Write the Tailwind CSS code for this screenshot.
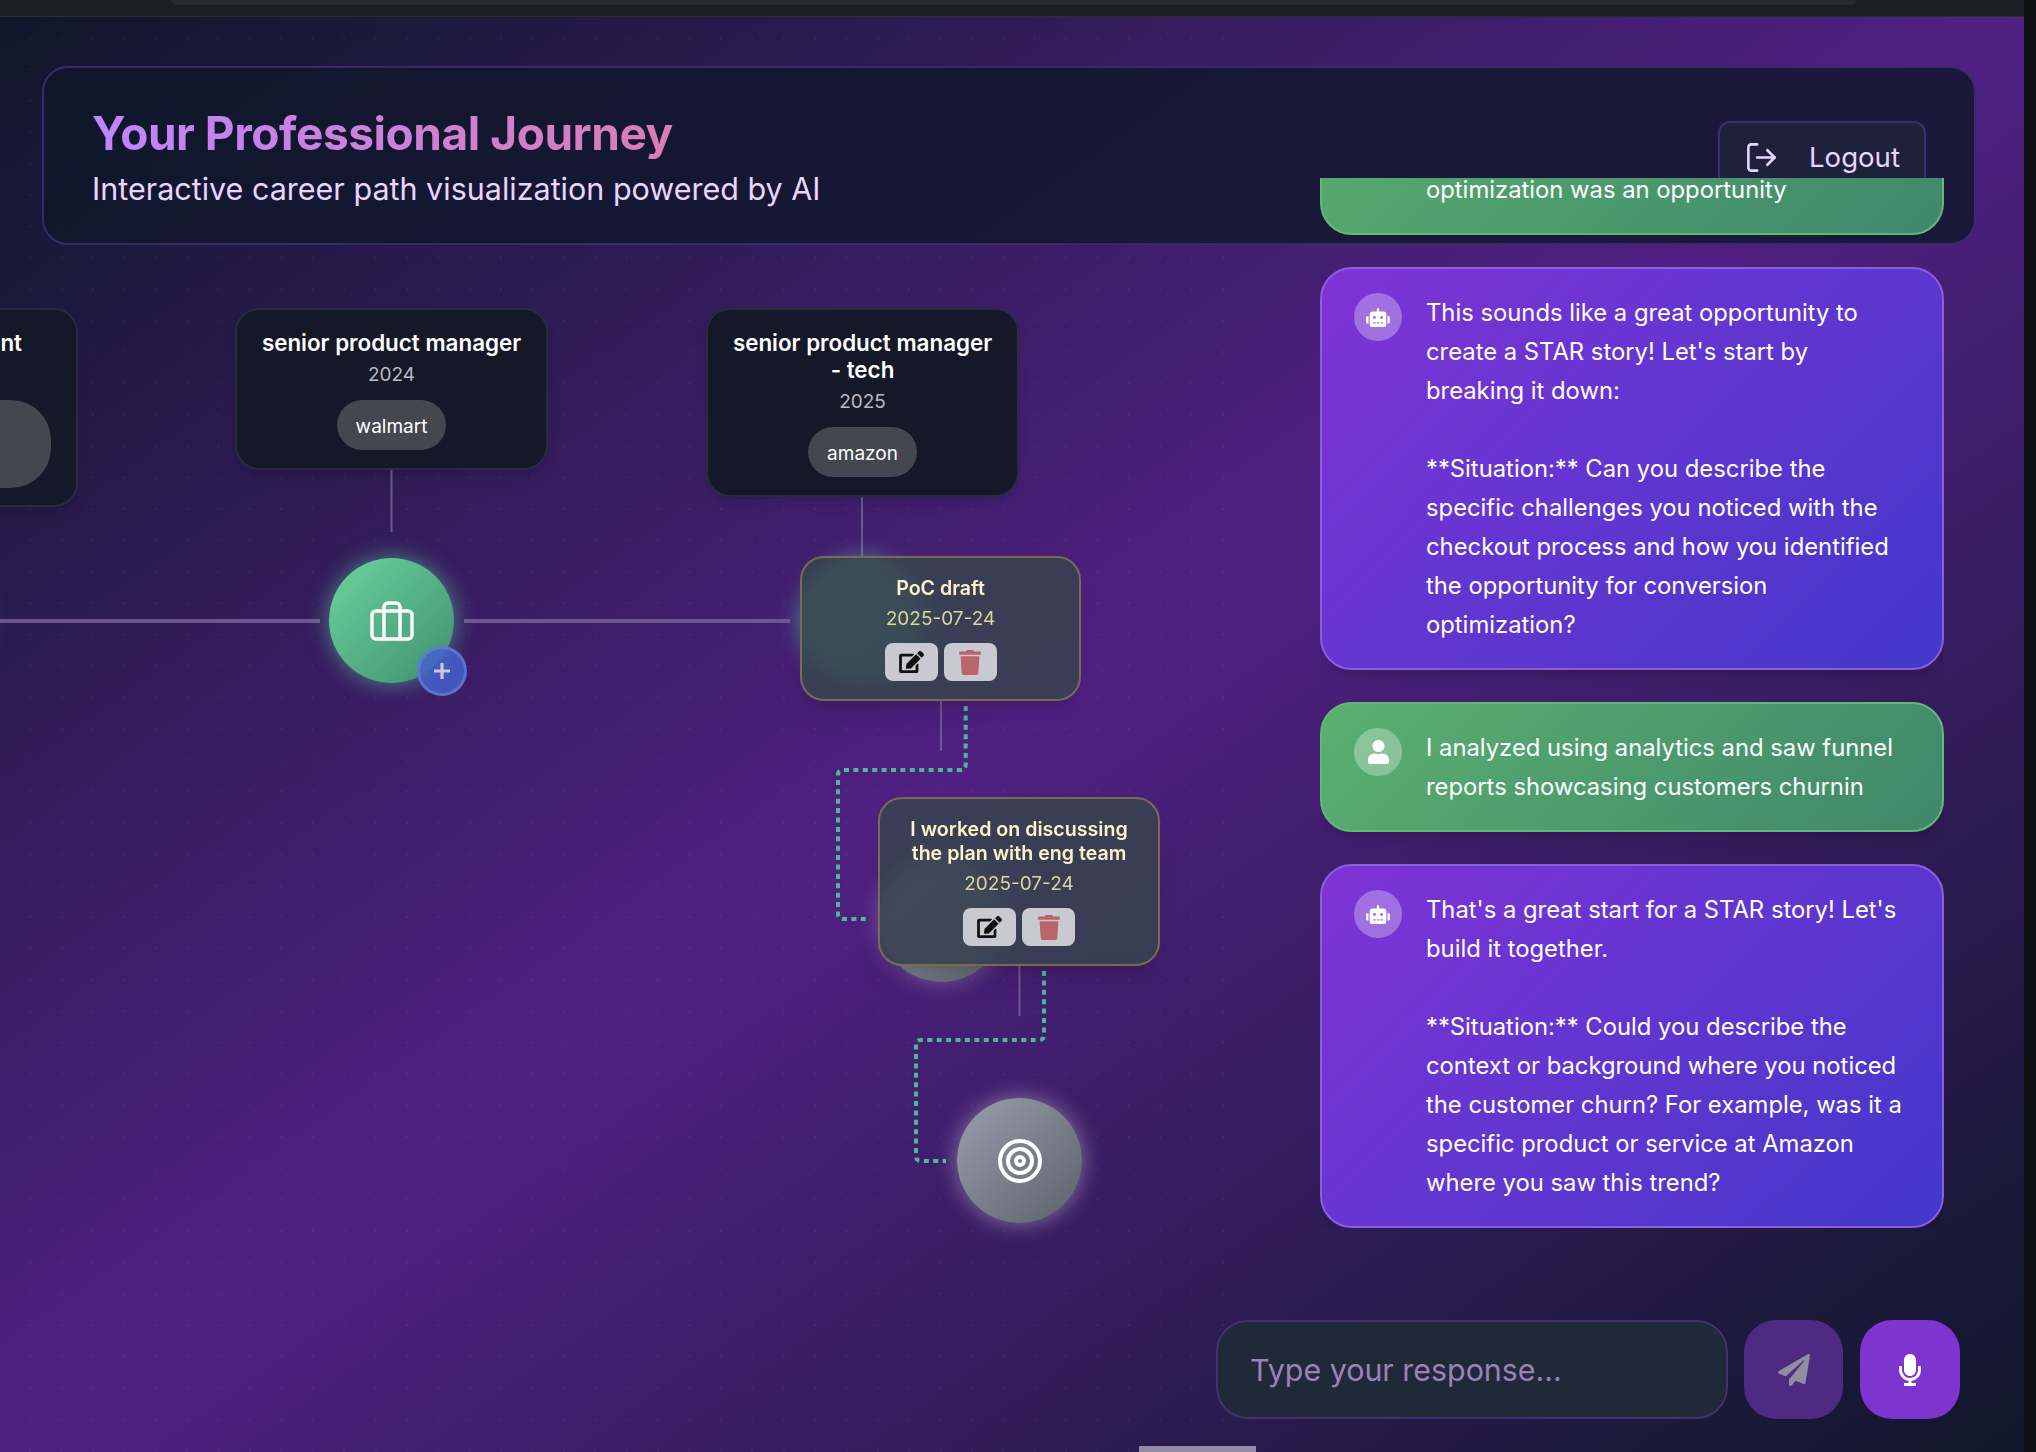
<!DOCTYPE html>
<html lang="en">
<head>
    <meta charset="UTF-8">
    <meta name="viewport" content="width=device-width, initial-scale=1.0">
    <title>Your Professional Journey</title>
    <script src="https://cdn.jsdelivr.net/npm/@tailwindcss/browser@4"></script>
</head>
<body class="bg-[#0f1115] font-[Inter,sans-serif]">
<div class="flex w-[2036px] h-[1452px] overflow-hidden">
    <div class="flex flex-col w-[2024px] h-full">
        <!-- browser chrome sliver -->
        <div class="h-[17px] shrink-0 bg-[#1b1e24] border-b border-[#2a2d33]">
            <div class="ml-[171px] w-[1685px] h-[5px] bg-[#262a31] rounded-b-lg"></div>
        </div>

        <main class="relative flex-1 overflow-hidden bg-[linear-gradient(to_bottom_right,#0f172a_0%,#502083_50%,#0f172a_100%)]">
            <!-- dotted grid -->
            <div class="absolute left-0 top-0 w-[1254px] h-full bg-[radial-gradient(circle,rgba(255,255,255,0.05)_1px,transparent_1.5px)] bg-size-[31.4px_31.4px] bg-position-[14.5px_-26px]"></div>

            <!-- timeline canvas -->
            <div class="absolute inset-0">
                <svg class="absolute left-0 top-0" width="2024" height="1435" viewBox="0 17 2024 1435" fill="none">
                    <path d="M0 621H320M464 621H790" stroke="#6d5591" stroke-width="4"/>
                    <path d="M391.5 469V532M862 497V556M941 701V751M1019.5 966V1016" stroke="#6a5a8e" stroke-width="2"/>
                    <path d="M965.7 706V765q0 5-5 5H843q-5 0-5 5V914q0 5 5 5H868" stroke="#4cb996" stroke-width="4" stroke-dasharray="5 4.4"/>
                    <path d="M1044 971V1035q0 5-5 5H921q-5 0-5 5V1156q0 5 5 5H946" stroke="#4cb996" stroke-width="4" stroke-dasharray="5 4.4"/>
                </svg>

                <!-- year cards -->
                <div class="absolute left-[-235px] top-[291px] w-[313px] h-[199px] px-5 pt-[19px] flex flex-col items-end text-center bg-[#151829] border-2 border-[#2a2b3c] rounded-[24px] shadow-lg">
                    <div class="mr-[34px] text-[22.4px] leading-[27px] font-semibold text-white whitespace-nowrap">product management</div>
                    <div class="mt-[44px] mr-[5px] w-[260px] h-[88px] rounded-[40px] bg-[#44474f]"></div>
                </div>
                <div class="absolute left-[235px] top-[291px] w-[313px] px-5 pt-[19px] pb-[18px] flex flex-col items-center text-center bg-[#151829] border-2 border-[#2a2b3c] rounded-[24px] shadow-lg">
                    <div class="text-[22.4px] leading-[27px] font-semibold text-white">senior product manager</div>
                    <div class="mt-[7px] text-[19px] leading-6 text-[#b9bbc3]">2024</div>
                    <div class="mt-[13px] h-[50px] px-[19px] pt-[5px] flex items-center rounded-[25px] bg-[#44474f] text-[19px] text-white">walmart</div>
                </div>
                <div class="absolute left-[706px] top-[291px] w-[313px] px-5 pt-[19px] pb-[18px] flex flex-col items-center text-center bg-[#151829] border-2 border-[#2a2b3c] rounded-[24px] shadow-lg">
                    <div class="text-[22.4px] leading-[27px] font-semibold text-white">senior product manager - tech</div>
                    <div class="mt-[7px] text-[19px] leading-6 text-[#b9bbc3]">2025</div>
                    <div class="mt-[13px] h-[50px] px-[19px] pt-[5px] flex items-center rounded-[25px] bg-[#44474f] text-[19px] text-white">amazon</div>
                </div>

                <!-- nodes -->
                <div class="absolute left-[-141px] top-[541px] size-[125px] rounded-full bg-[#5aba8c] shadow-[0_0_22px_rgba(94,210,160,0.6)]"></div>
                <div class="absolute left-[329px] top-[541px] size-[125px] rounded-full flex items-center justify-center bg-[linear-gradient(135deg,#6cd49c,#3f8f70)] shadow-[0_0_22px_rgba(94,210,160,0.6)]">
                    <svg width="48" height="48" viewBox="0 0 24 24" fill="none" stroke="#fff" stroke-width="1.7" stroke-linecap="round" stroke-linejoin="round"><rect x="2" y="7" width="20" height="14" rx="2"/><path d="M16 21V5a2 2 0 0 0-2-2h-4a2 2 0 0 0-2 2v16"/></svg>
                </div>
                <div class="absolute left-[417px] top-[629px] size-[50px] rounded-full flex items-center justify-center bg-[#4560ca]/85 border-[3px] border-[#6d8fe0]/50">
                    <svg width="18" height="18" viewBox="0 0 18 18" stroke="#c8c9dc" stroke-width="3.2"><path d="M9 1V17M1 9H17"/></svg>
                </div>
                <div class="absolute left-[800px] top-[541px] size-[125px] rounded-full bg-[linear-gradient(135deg,#6cd49c,#3f8f70)] shadow-[0_0_22px_rgba(94,210,160,0.6)]"></div>
                <div class="absolute left-[879px] top-[840px] size-[125px] rounded-full bg-[linear-gradient(135deg,#9aa0ab,#5a616b)] shadow-[0_0_22px_rgba(255,255,255,0.3)]"></div>
                <div class="absolute left-[957px] top-[1081px] size-[125px] rounded-full flex items-center justify-center bg-[linear-gradient(135deg,#9aa0ab,#5a616b)] shadow-[0_0_22px_rgba(255,255,255,0.4)]">
                    <svg width="48" height="48" viewBox="0 0 24 24" fill="none" stroke="#fff" stroke-width="2"><circle cx="12" cy="12" r="10"/><circle cx="12" cy="12" r="6"/><circle cx="12" cy="12" r="2"/></svg>
                </div>

                <!-- event popovers -->
                <div class="absolute left-[800px] top-[539px] w-[281px] pt-[18px] pb-[18px] flex flex-col items-center text-center bg-[#374151]/90 backdrop-blur-[10px] border-2 border-[#7a6a50] rounded-[24px] shadow-xl">
                    <div class="text-[19.6px] leading-6 font-semibold text-[#fef3c7]">PoC draft</div>
                    <div class="mt-[7px] text-[19px] leading-6 text-[#dcd59b]">2025-07-24</div>
                    <div class="mt-[12px] flex gap-[6px]">
                        <button class="w-[53px] h-[38px] rounded-lg bg-[#c8c9d1] flex items-center justify-center">
                            <svg width="25" height="22" viewBox="0 0 576 512" fill="#111"><path d="M402.6 83.2l90.2 90.2c3.8 3.8 3.8 10 0 13.8L274.4 405.6l-92.8 10.3c-12.4 1.4-22.9-9.1-21.5-21.5l10.3-92.8L388.8 83.2c3.8-3.8 10-3.8 13.8 0zm162-22.9l-48.8-48.8c-15.2-15.2-39.9-15.2-55.2 0l-35.4 35.4c-3.8 3.8-3.8 10 0 13.8l90.2 90.2c3.8 3.8 10 3.8 13.8 0l35.4-35.4c15.2-15.3 15.2-40 0-55.2zM384 346.2V448H64V128h229.8c3.2 0 6.2-1.3 8.5-3.5l40-40c7.6-7.6 2.2-20.5-8.5-20.5H48C21.5 64 0 85.5 0 112v352c0 26.5 21.5 48 48 48h352c26.5 0 48-21.5 48-48V306.2c0-10.7-12.9-16-20.5-8.5l-40 40c-2.2 2.3-3.5 5.3-3.5 8.5z"/></svg>
                        </button>
                        <button class="w-[53px] h-[38px] rounded-lg bg-[#c8c9d1] flex items-center justify-center">
                            <svg width="22" height="25" viewBox="0 0 448 512" fill="#b8666a"><path d="M432 32H312l-9.4-18.7A24 24 0 0 0 281.1 0H166.8a23.72 23.72 0 0 0-21.4 13.3L136 32H16A16 16 0 0 0 0 48v32a16 16 0 0 0 16 16h416a16 16 0 0 0 16-16V48a16 16 0 0 0-16-16zM53.2 467a48 48 0 0 0 47.9 45h245.8a48 48 0 0 0 47.9-45L416 128H32z"/></svg>
                        </button>
                    </div>
                </div>
                <div class="absolute left-[878px] top-[780px] w-[282px] pt-[18px] pb-[18px] px-[26px] flex flex-col items-center text-center bg-[#374151]/90 backdrop-blur-[10px] border-2 border-[#7a6a50] rounded-[24px] shadow-xl">
                    <div class="text-[19.6px] leading-6 font-semibold text-[#fef3c7]">I worked on discussing the plan with eng team</div>
                    <div class="mt-[7px] text-[19px] leading-6 text-[#dcd59b]">2025-07-24</div>
                    <div class="mt-[12px] flex gap-[6px]">
                        <button class="w-[53px] h-[38px] rounded-lg bg-[#c8c9d1] flex items-center justify-center">
                            <svg width="25" height="22" viewBox="0 0 576 512" fill="#111"><path d="M402.6 83.2l90.2 90.2c3.8 3.8 3.8 10 0 13.8L274.4 405.6l-92.8 10.3c-12.4 1.4-22.9-9.1-21.5-21.5l10.3-92.8L388.8 83.2c3.8-3.8 10-3.8 13.8 0zm162-22.9l-48.8-48.8c-15.2-15.2-39.9-15.2-55.2 0l-35.4 35.4c-3.8 3.8-3.8 10 0 13.8l90.2 90.2c3.8 3.8 10 3.8 13.8 0l35.4-35.4c15.2-15.3 15.2-40 0-55.2zM384 346.2V448H64V128h229.8c3.2 0 6.2-1.3 8.5-3.5l40-40c7.6-7.6 2.2-20.5-8.5-20.5H48C21.5 64 0 85.5 0 112v352c0 26.5 21.5 48 48 48h352c26.5 0 48-21.5 48-48V306.2c0-10.7-12.9-16-20.5-8.5l-40 40c-2.2 2.3-3.5 5.3-3.5 8.5z"/></svg>
                        </button>
                        <button class="w-[53px] h-[38px] rounded-lg bg-[#c8c9d1] flex items-center justify-center">
                            <svg width="22" height="25" viewBox="0 0 448 512" fill="#b8666a"><path d="M432 32H312l-9.4-18.7A24 24 0 0 0 281.1 0H166.8a23.72 23.72 0 0 0-21.4 13.3L136 32H16A16 16 0 0 0 0 48v32a16 16 0 0 0 16 16h416a16 16 0 0 0 16-16V48a16 16 0 0 0-16-16zM53.2 467a48 48 0 0 0 47.9 45h245.8a48 48 0 0 0 47.9-45L416 128H32z"/></svg>
                        </button>
                    </div>
                </div>
            </div>

            <!-- header -->
            <header class="relative mt-[49px] ml-[42px] w-[1934px] h-[179px] px-[48px] flex items-center justify-between bg-[#0f172a]/80 border-2 border-[#3b2a6b] rounded-[26px]">
                <div class="mt-[5px] flex flex-col">
                    <h1 class="w-fit text-[46px] leading-[52px] font-bold tracking-[-0.45px] text-transparent bg-clip-text bg-[linear-gradient(90deg,#c084fc,#d97db4)]">Your Professional Journey</h1>
                    <p class="mt-[10px] text-[30.5px] leading-[40px] text-[#e9d5ff]">Interactive career path visualization powered by AI</p>
                </div>
                <button class="mt-1 w-[208px] h-[74px] pl-[24px] flex items-center gap-[30px] bg-[#1e2139] border-2 border-[#3f2c70] rounded-xl text-[27.6px] text-[#e9d5ff]">
                    <svg width="35" height="35" viewBox="0 0 24 24" fill="none" stroke="#e9d5ff" stroke-width="1.8" stroke-linecap="round" stroke-linejoin="round"><path d="M9 21H5a2 2 0 0 1-2-2V5a2 2 0 0 1 2-2h4"/><path d="M16 17l5-5-5-5"/><path d="M21 12H9"/></svg>
                    Logout
                </button>
            </header>

            <!-- chat -->
            <aside class="absolute left-[1320px] top-[161px] w-[624px] h-[1050px] overflow-hidden flex flex-col justify-end gap-8 text-[23.8px] leading-[39px] text-white">
                <div class="shrink-0 h-[220px] flex items-end pl-[104px] pb-[24px] rounded-[32px] border-2 border-[#63b878] bg-[linear-gradient(135deg,#5bb06f,#3f876b)]">
                    <p>optimization was an opportunity</p>
                </div>
                <div class="shrink-0 flex gap-6 pl-8 pr-[36px] py-[24px] rounded-[32px] border-2 border-[#8b5fdc] bg-[linear-gradient(135deg,#7f33d6,#4338ca)] shadow-lg">
                    <div class="shrink-0 size-12 rounded-full bg-white/30 flex items-center justify-center">
                        <svg width="24" height="19" viewBox="0 0 640 512" fill="#fff"><path d="M32,224H64V416H32A31.96166,31.96166,0,0,1,0,384V256A31.96166,31.96166,0,0,1,32,224Zm512-48V448a64.06328,64.06328,0,0,1-64,64H160a64.06328,64.06328,0,0,1-64-64V176a79.974,79.974,0,0,1,80-80H288V32a32,32,0,0,1,64,0V96H464A79.974,79.974,0,0,1,544,176ZM264,256a40,40,0,1,0-40,40A39.997,39.997,0,0,0,264,256Zm-8,128H192v32h64Zm96,0H288v32h64ZM456,256a40,40,0,1,0-40,40A39.997,39.997,0,0,0,456,256Zm-8,128H384v32h64ZM640,256V384a31.96166,31.96166,0,0,1-32,32H576V224h32A31.96166,31.96166,0,0,1,640,256Z"/></svg>
                    </div>
                    <p>This sounds like a great opportunity to create a STAR story! Let's start by breaking it down:<br><br>**Situation:** Can you describe the specific challenges you noticed with the checkout process and how you identified the opportunity for conversion optimization?</p>
                </div>
                <div class="shrink-0 flex gap-6 pl-8 pr-[36px] py-[24px] rounded-[32px] border-2 border-[#63b878] bg-[linear-gradient(135deg,#5bb06f,#3f876b)] shadow-lg">
                    <div class="shrink-0 size-12 rounded-full bg-white/30 flex items-center justify-center">
                        <svg width="21" height="24" viewBox="0 0 448 512" fill="#fff"><path d="M224 256c70.7 0 128-57.3 128-128S294.7 0 224 0 96 57.3 96 128s57.3 128 128 128zm89.6 32h-16.7c-22.2 10.2-46.9 16-72.9 16s-50.6-5.8-72.9-16h-16.7C60.2 288 0 348.2 0 422.4V464c0 26.5 21.5 48 48 48h352c26.5 0 48-21.5 48-48v-41.6c0-74.2-60.2-134.4-134.4-134.4z"/></svg>
                    </div>
                    <p>I analyzed using analytics and saw funnel reports showcasing customers churnin</p>
                </div>
                <div class="shrink-0 flex gap-6 pl-8 pr-[36px] py-[24px] rounded-[32px] border-2 border-[#8b5fdc] bg-[linear-gradient(135deg,#7f33d6,#4338ca)] shadow-lg">
                    <div class="shrink-0 size-12 rounded-full bg-white/30 flex items-center justify-center">
                        <svg width="24" height="19" viewBox="0 0 640 512" fill="#fff"><path d="M32,224H64V416H32A31.96166,31.96166,0,0,1,0,384V256A31.96166,31.96166,0,0,1,32,224Zm512-48V448a64.06328,64.06328,0,0,1-64,64H160a64.06328,64.06328,0,0,1-64-64V176a79.974,79.974,0,0,1,80-80H288V32a32,32,0,0,1,64,0V96H464A79.974,79.974,0,0,1,544,176ZM264,256a40,40,0,1,0-40,40A39.997,39.997,0,0,0,264,256Zm-8,128H192v32h64Zm96,0H288v32h64ZM456,256a40,40,0,1,0-40,40A39.997,39.997,0,0,0,456,256Zm-8,128H384v32h64ZM640,256V384a31.96166,31.96166,0,0,1-32,32H576V224h32A31.96166,31.96166,0,0,1,640,256Z"/></svg>
                    </div>
                    <p>That's a great start for a STAR story! Let's build it together.<br><br>**Situation:** Could you describe the context or background where you noticed the customer churn? For example, was it a specific product or service at Amazon where you saw this trend?</p>
                </div>
            </aside>

            <!-- input row -->
            <div class="absolute left-[1216px] top-[1303px] flex items-stretch h-[99px]">
                <div class="w-[512px] px-8 pt-[2px] flex items-center bg-[#1f2937] border-2 border-[#43306d] rounded-[32px] text-[30.4px] text-[#9a82b8]">Type your response...</div>
                <button class="ml-[16px] w-[99px] rounded-[32px] bg-[#4e2a82] flex items-center justify-center">
                    <svg width="32" height="32" viewBox="0 0 512 512" fill="#908e9e"><path d="M476 3.2L12.5 270.6c-18.1 10.4-15.8 35.6 2.2 43.2L121 358.4l287.3-253.2c5.5-4.9 13.3 2.6 8.6 8.3L176 407v80.5c0 23.6 28.5 32.9 42.5 15.8L282 426l124.6 52.2c14.2 6 30.4-2.9 33-18.2l72-432C515 7.8 493.3-6.8 476 3.2z"/></svg>
                </button>
                <button class="ml-[17px] w-[100px] rounded-[32px] bg-[#7e35d0] flex items-center justify-center">
                    <svg width="22" height="32" viewBox="0 0 352 512" fill="#fff"><path d="M176 352c53.02 0 96-42.98 96-96V96c0-53.02-42.98-96-96-96S80 42.98 80 96v160c0 53.02 42.98 96 96 96zm160-160h-16c-8.84 0-16 7.16-16 16v48c0 74.8-64.49 134.82-140.79 127.38C96.71 376.89 48 317.11 48 250.3V208c0-8.84-7.16-16-16-16H16c-8.84 0-16 7.16-16 16v40.16c0 89.64 63.97 169.55 152 181.69V464H96c-8.84 0-16 7.16-16 16v16c0 8.84 7.16 16 16 16h160c8.84 0 16-7.16 16-16v-16c0-8.84-7.16-16-16-16h-56v-33.77C285.71 418.47 352 344.9 352 256v-48c0-8.84-7.16-16-16-16z"/></svg>
                </button>
            </div>

            <!-- scrollbar thumb -->
            <div class="absolute left-[1139px] bottom-0 w-[117px] h-[6px] bg-[#938ba5]"></div>
        </main>
    </div>
    <div class="w-3 shrink-0 bg-[#0f1115]"></div>
</div>
</body>
</html>
